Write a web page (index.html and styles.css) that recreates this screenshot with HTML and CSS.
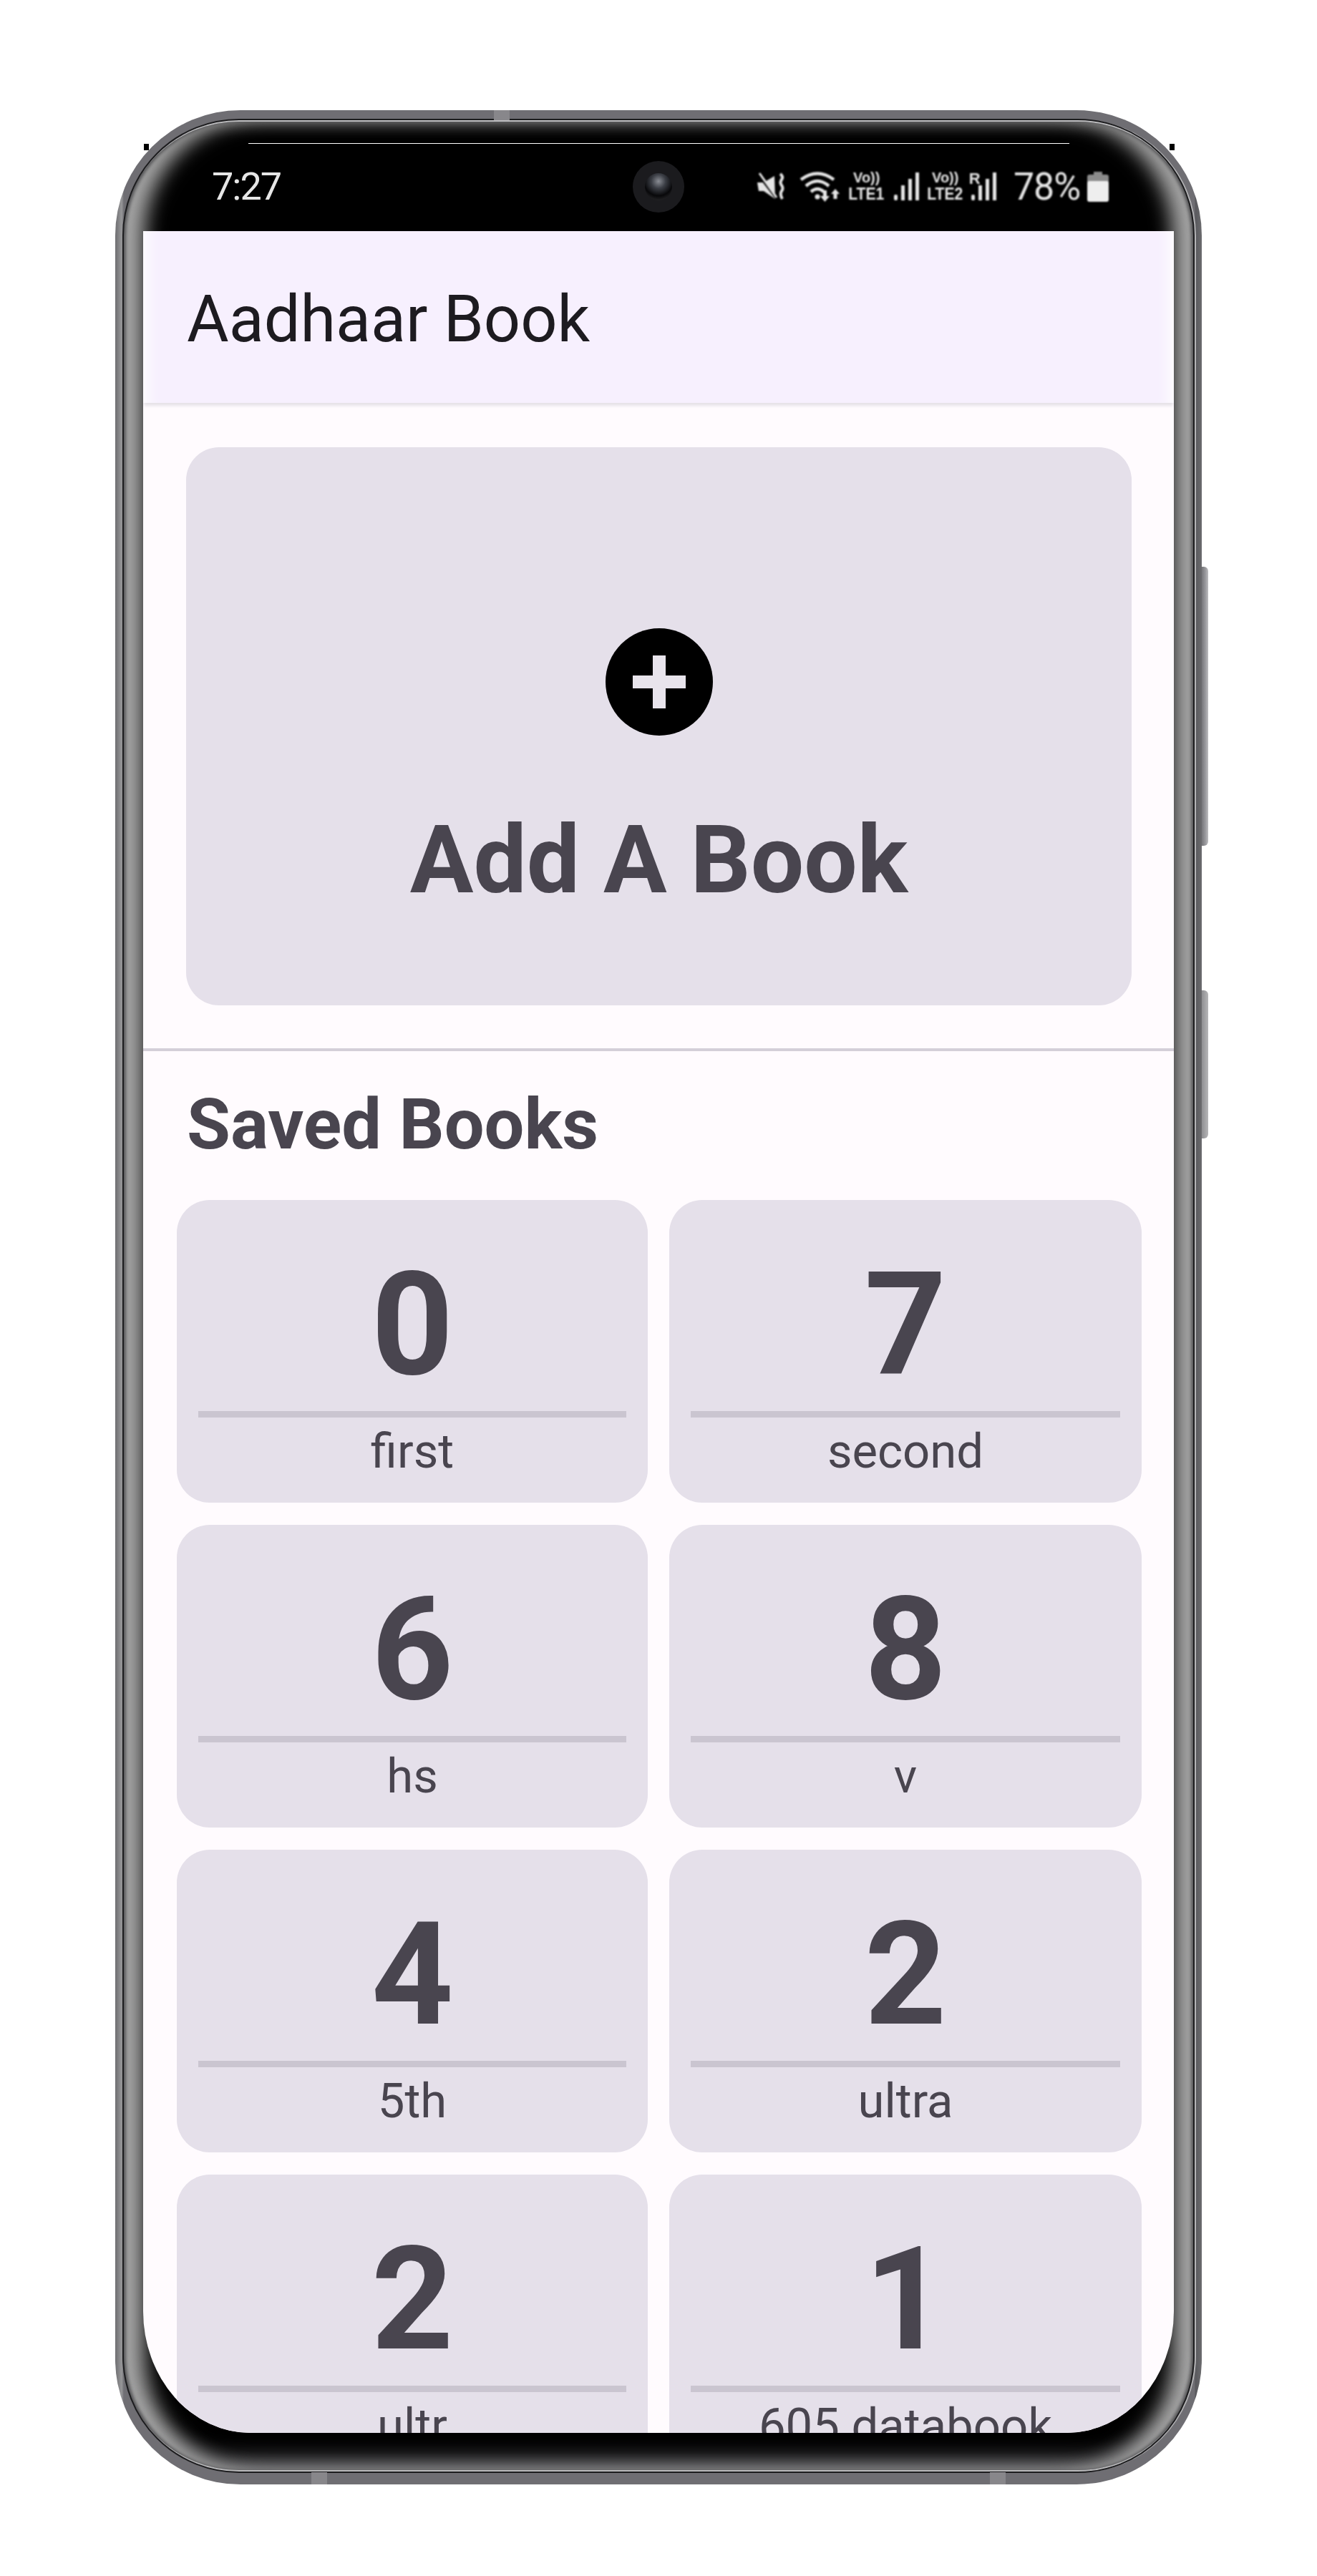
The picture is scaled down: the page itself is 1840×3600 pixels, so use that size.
FILE: index.html
```html
<!DOCTYPE html>
<html lang="en">
<head>
<meta charset="utf-8">
<title>Aadhaar Book</title>
<link rel="stylesheet" href="styles.css">
</head>
<body>
<div class="phone">
  <span class="notch notch-top"></span>
  <span class="notch notch-bl"></span>
  <span class="notch notch-br"></span>
  <span class="key key-a"></span>
  <span class="key key-b"></span>
  <span class="tick tick-l"></span>
  <span class="tick tick-r"></span>
  <div class="bezel">
    <div class="status">
      <span class="hairline"></span>
      <span class="time">7:27</span>
      <span class="camera"><span class="lens"></span></span>
      <div class="tray">
        <svg class="i-mute" viewBox="0 0 40 40" width="40" height="40"><path fill="#e6e6e6" d="M0 14h9L24 5l1 32L9 26H2z"/><path stroke="#000" stroke-width="4" d="M1 2l26 34"/><path stroke="#e6e6e6" stroke-width="3" d="M3 1l24 34"/><path fill="none" stroke="#e6e6e6" stroke-width="4" d="M32 2q5 4 2 8t0 8q3 4 0 8t1 11"/></svg>
        <svg class="i-wifi" viewBox="0 0 58 46" width="58" height="46"><g fill="none" stroke="#e6e6e6" stroke-width="4.500"><path d="M2 13Q25-4 48 13"/><path d="M9 22Q25 8 41 22"/><path d="M16 30Q25 22 34 30"/></g><circle cx="25" cy="37" r="3.500" fill="#e6e6e6"/><path fill="#e6e6e6" d="M33 28h5v8h4l-6.500 8-6.500-8h4zM50 26l6 7h-3.500v7h-5v-7H44z"/></svg>
        <span class="net"><b>Vo))</b><b>LTE1</b></span>
        <svg class="i-bars" viewBox="0 0 36 40" width="36" height="40"><g fill="#e6e6e6"><rect x="0" y="31" width="5" height="8" rx="2"/><rect x="10" y="18" width="5" height="21"/><rect x="20" y="9" width="5" height="30"/><rect x="30" y="0" width="5" height="39"/></g></svg>
        <span class="net net-2"><b>Vo))</b><b>LTE2</b></span>
        <span class="roam"><b>R</b><svg class="i-bars" viewBox="0 0 36 40" width="38" height="40"><g fill="#e6e6e6"><rect x="0" y="31" width="5" height="8" rx="2"/><rect x="10" y="18" width="5" height="21"/><rect x="20" y="9" width="5" height="30"/><rect x="30" y="0" width="5" height="39"/></g></svg></span>
        <span class="pct">78%</span>
        <svg class="i-batt" viewBox="0 0 30 42" width="30" height="42"><path fill="#8a8a8a" d="M9 0h12v4h6q3 0 3 3v8H0V7q0-3 3-3h6z"/><rect y="13" width="30" height="29" rx="3" fill="#eee"/></svg>
      </div>
    </div>
    <div class="screen">
      <header class="appbar"><h1 class="title">Aadhaar Book</h1></header>
      <section class="add-section">
        <div class="add-card">
          <svg class="plus" viewBox="0 0 150 150" width="150" height="150"><circle cx="75" cy="75" r="75" fill="#000"/><path fill="#e8e4ec" d="M66 38h18v28h28v18H84v28H66V84H38V66h28z"/></svg>
          <div class="add-label">Add A Book</div>
        </div>
      </section>
      <h2 class="saved">Saved Books</h2>
      <div class="books">
        <article class="book"><div class="num">0</div><hr class="rule"><div class="name">first</div></article>
        <article class="book"><div class="num">7</div><hr class="rule"><div class="name">second</div></article>
        <article class="book"><div class="num">6</div><hr class="rule"><div class="name">hs</div></article>
        <article class="book"><div class="num">8</div><hr class="rule"><div class="name">v</div></article>
        <article class="book"><div class="num">4</div><hr class="rule"><div class="name">5th</div></article>
        <article class="book"><div class="num">2</div><hr class="rule"><div class="name">ultra</div></article>
        <article class="book"><div class="num">2</div><hr class="rule"><div class="name">ultr</div></article>
        <article class="book"><div class="num">1</div><hr class="rule"><div class="name">605 databook</div></article>
      </div>
    </div>
  </div>
</div>
</body>
</html>
```
FILE: styles.css
```css
* { box-sizing: border-box; }
html, body { margin: 0; padding: 0; background: #fff; }
body { height: 3600px; overflow: hidden; font-family: Roboto, "Liberation Sans", sans-serif; }

.phone {
  position: relative;
  width: 1518px;
  height: 3318px;
  margin: 154px 0 0 161px;
  padding: 13px 11px 17px;
  border-radius: 175px;
  background: linear-gradient(90deg, #6d6d70 0, #979799 9px, #6f6e73 12px, #6f6e73 calc(100% - 10px), #59595d calc(100% - 9px), #6b6b6e 100%);
}
.notch { position: absolute; width: 22px; height: 14px; background: #88878b; }
.notch-top { left: 529px; top: 0; }
.notch-bl { left: 274px; bottom: 0; height: 17px; }
.notch-br { left: 1222px; bottom: 0; height: 17px; }
.key {
  position: absolute;
  left: 100%;
  width: 9px;
  border-radius: 0 6px 6px 0;
  background: linear-gradient(90deg, #76767a, #9b9b9f 60%, #bdbdc0);
}
.key-a { top: 638px; height: 390px; }
.key-b { top: 1230px; height: 207px; background: linear-gradient(90deg, #8f8f92, #b5b5b7); }
.tick { position: absolute; top: 47px; width: 7px; height: 9px; background: #000; }
.tick-l { left: 40px; }
.tick-r { right: 38px; }

.bezel {
  display: flex;
  flex-direction: column;
  height: 100%;
  padding: 0 28px;
  border-radius: 162px;
  background: #000;
  border-top: 3px solid #bdbdbf;
  border-bottom: 3px solid #b9b9bb;
  outline: 2px solid #1c1c1e;
  outline-offset: -1px;
  box-shadow:
    3px 0 0 0 #b5b5b7,
    inset 5px 0 4px -1px #565658,
    inset -5px 0 4px -1px #565658,
    inset 36px 0 28px -6px #a6a6a6,
    inset -36px 0 28px -6px #a6a6a6,
    inset 0 -34px 26px -14px #47474a;
}

.status {
  position: relative;
  flex: none;
  display: flex;
  align-items: center;
  justify-content: space-between;
  height: 153px;
  padding: 28px 91px 0 96px;
  color: #e6e6e6;
}
.hairline { position: absolute; left: 147px; right: 146px; top: 30px; height: 1px; background: #fff; }
.time { font-size: 54px; font-weight: 400; letter-spacing: -2px; line-height: 1; filter: blur(.7px); }
.camera {
  position: absolute;
  left: 684px;
  top: 55px;
  display: flex;
  align-items: center;
  justify-content: center;
  width: 72px;
  height: 72px;
  border-radius: 50%;
  background: #1b1b1e;
}
.lens {
  width: 38px;
  height: 38px;
  border-radius: 50%;
  background: radial-gradient(circle at 50% 30%, #8a8d94 0, #3b3e45 30%, #08080a 62%, #3a3a3c 100%);
}
.tray { display: flex; align-items: center; filter: blur(.8px); }
.tray svg { display: block; flex: none; }
.i-wifi { margin-left: 19px; }
.net { display: flex; flex-direction: column; align-items: center; width: 52px; margin-left: 10px; line-height: 1; }
.net b { font-family: "Liberation Sans", sans-serif; font-weight: 700; }
.net b:first-child { font-size: 20px; height: 22px; }
.net b:last-child { font-size: 23px; transform: scaleX(.92); }
.net-2 { margin-left: 10px; }
.tray > .i-bars { margin-left: 12px; }
.roam { position: relative; display: block; width: 38px; height: 40px; margin-left: 9px; }
.roam b { position: absolute; left: -2px; top: -2px; font: 700 22px/1 "Liberation Sans", sans-serif; }
.pct { margin-left: 20px; font-size: 54px; font-weight: 400; letter-spacing: -1px; line-height: 1; transform: scaleX(.96); }
.i-batt { margin-left: 8px; }

.screen {
  flex: none;
  height: 3077px;
  overflow: hidden;
  background: #fffbfe;
  border-radius: 0 0 150px 150px / 0 0 170px 170px;
  filter: blur(.6px);
}
.appbar {
  display: flex;
  align-items: center;
  height: 240px;
  padding-left: 61px;
  background: #f7f0fe;
  box-shadow: 0 5px 4px -1px #e6e2e8, inset 22px 0 20px -16px #fff, inset -22px 0 20px -16px #fff;
}
.title { margin: 8px 0 0; font-size: 90px; font-weight: 400; color: #1d1b20; line-height: 1; }

.add-section { padding: 62px 59px 60px 60px; border-bottom: 4px solid #d4cfd8; }
.add-card {
  display: flex;
  flex-direction: column;
  align-items: center;
  height: 780px;
  padding-top: 253px;
  border-radius: 46px;
  background: #e5e0ea;
}
.plus { display: block; flex: none; }
.add-label { margin-top: 102px; font-size: 132px; font-weight: 700; line-height: 1.1; color: #49454f; }

.saved { margin: 0; padding: 43px 0 0 61px; height: 208px; font-size: 99px; font-weight: 700; line-height: 1.2; color: #49454f; }
.books {
  display: grid;
  grid-template-columns: 658px 660px;
  grid-auto-rows: 423px;
  gap: 31px 30px;
  padding: 0 0 0 47px;
}
.book {
  display: flex;
  flex-direction: column;
  align-items: center;
  padding: 57px 30px 0;
  border-radius: 46px;
  background: #e5e0ea;
  color: #49454f;
}
.num { height: 238px; font-size: 200px; font-weight: 700; line-height: 236px; }
.rule { width: 100%; height: 9px; margin: 0; border: 0; background: #cac5d0; }
.name { margin-top: 8px; font-size: 67px; font-weight: 400; line-height: 78px; }
```
